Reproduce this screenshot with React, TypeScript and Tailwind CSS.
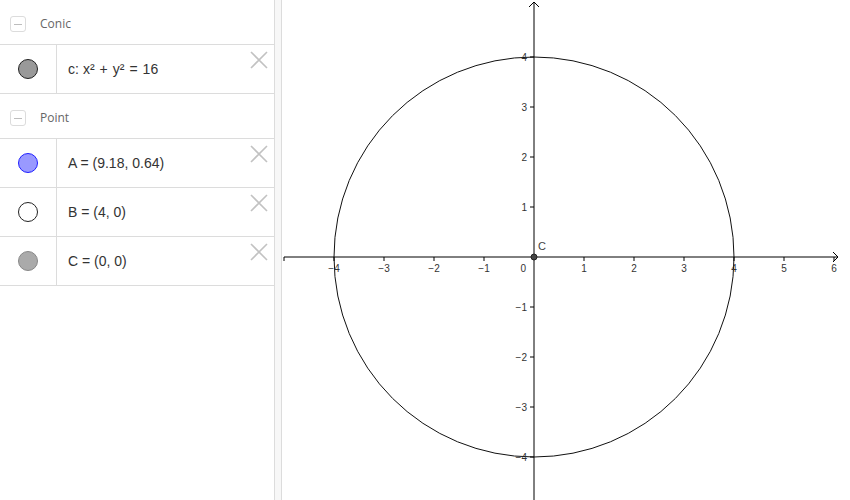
import React from 'react';

const ox = 252;
const oy = 257;
const u = 50;

const Collapse: React.FC = () => (
  <div className="w-[16px] h-[16px] rounded-[3px] border border-[#dcdcdc] flex items-center justify-center">
    <div className="w-[8px] h-[1px] bg-[#bdbdbd]" />
  </div>
);

const CloseX: React.FC = () => (
  <svg width="18" height="18" viewBox="0 0 18 18" className="block">
    <path d="M1 1 L17 17 M17 1 L1 17" stroke="#c2c2c2" strokeWidth="1.6" />
  </svg>
);

const Header: React.FC<{ label: string }> = ({ label }) => (
  <div className="h-[45px] border-b border-[#dcdcdc] flex items-center pl-[10px] pt-[4px] gap-[14px]">
    <Collapse />
    <span className="text-[12px] text-[#666]" style={{ fontFamily: '"Open Sans", sans-serif' }}>{label}</span>
  </div>
);

const Row: React.FC<{ marble: string; children: React.ReactNode }> = ({ marble, children }) => (
  <div className="h-[49px] border-b border-[#dcdcdc] flex">
    <div className="w-[57px] border-r border-[#dcdcdc] flex items-center justify-center">
      <div className={`w-[20px] h-[20px] rounded-full border ${marble}`} />
    </div>
    <div className="flex-1 relative flex items-center pl-[11px] text-[14px] text-[#333] font-['Liberation_Sans',sans-serif]">
      {children}
      <div className="absolute right-[6px] top-[6px]">
        <CloseX />
      </div>
    </div>
  </div>
);

const Graph: React.FC = () => {
  const xs = [-5, -4, -3, -2, -1, 1, 2, 3, 4, 5, 6];
  const ys = [4, 3, 2, 1, -1, -2, -3, -4];
  const lab = (n: number) => (n < 0 ? `\u2212${-n}` : `${n}`);
  return (
    <svg width="568" height="500" className="block" style={{ fontFamily: '"Liberation Sans", sans-serif' }}>
      <circle cx={ox} cy={oy} r={4 * u} fill="none" stroke="#111" strokeWidth="1" />
      <line x1="2" y1={oy} x2="556" y2={oy} stroke="#000" strokeWidth="1" />
      <path d={`M551 ${oy - 5} L556 ${oy} L551 ${oy + 5}`} fill="none" stroke="#000" strokeWidth="1" />
      <line x1={ox} y1="2" x2={ox} y2="500" stroke="#000" strokeWidth="1" />
      <path d={`M${ox - 5} 7 L${ox} 2 L${ox + 5} 7`} fill="none" stroke="#000" strokeWidth="1" />
      {xs.map((n) => (
        <g key={`x${n}`}>
          <line x1={ox + n * u} y1={oy} x2={ox + n * u} y2={oy + 4} stroke="#000" strokeWidth="1" />
          {n !== -5 && (
            <text x={ox + n * u} y={oy + 15} fontSize="10" fill="#333" textAnchor="middle">
              {lab(n)}
            </text>
          )}
        </g>
      ))}
      {ys.map((n) => (
        <g key={`y${n}`}>
          <line x1={ox - 4} y1={oy - n * u} x2={ox} y2={oy - n * u} stroke="#000" strokeWidth="1" />
          <text x={ox - 7} y={oy - n * u + 4} fontSize="10" fill="#333" textAnchor="end">
            {lab(n)}
          </text>
        </g>
      ))}
      <text x={ox - 8} y={oy + 15} fontSize="10" fill="#333" textAnchor="end">0</text>
      <circle cx={ox} cy={oy} r="3" fill="#444" stroke="#222" strokeWidth="1" />
      <text x={ox + 4} y={oy - 7} fontSize="11" fill="#444">C</text>
    </svg>
  );
};

export default function App() {
  return (
    <div className="w-[850px] h-[500px] flex bg-white overflow-hidden">
      <div className="w-[274px] shrink-0 flex flex-col">
        <Header label="Conic" />
        <Row marble="bg-[#999] border-[#222]">
          <span>c:</span>
          <span className="ml-[4px]">x²</span>
          <span className="ml-[5px]">+</span>
          <span className="ml-[5px]">y²</span>
          <span className="ml-[5px]">=</span>
          <span className="ml-[5px]">16</span>
        </Row>
        <Header label="Point" />
        <Row marble="bg-[#9999ff] border-[#2020ff]">A = (9.18, 0.64)</Row>
        <Row marble="bg-white border-[#222]">B = (4, 0)</Row>
        <Row marble="bg-[#aaa] border-[#888]">C = (0, 0)</Row>
      </div>
      <div className="w-[8px] shrink-0 bg-[#f7f7f7] border-l border-r border-[#dcdcdc]" />
      <div className="flex-1">
        <Graph />
      </div>
    </div>
  );
}
